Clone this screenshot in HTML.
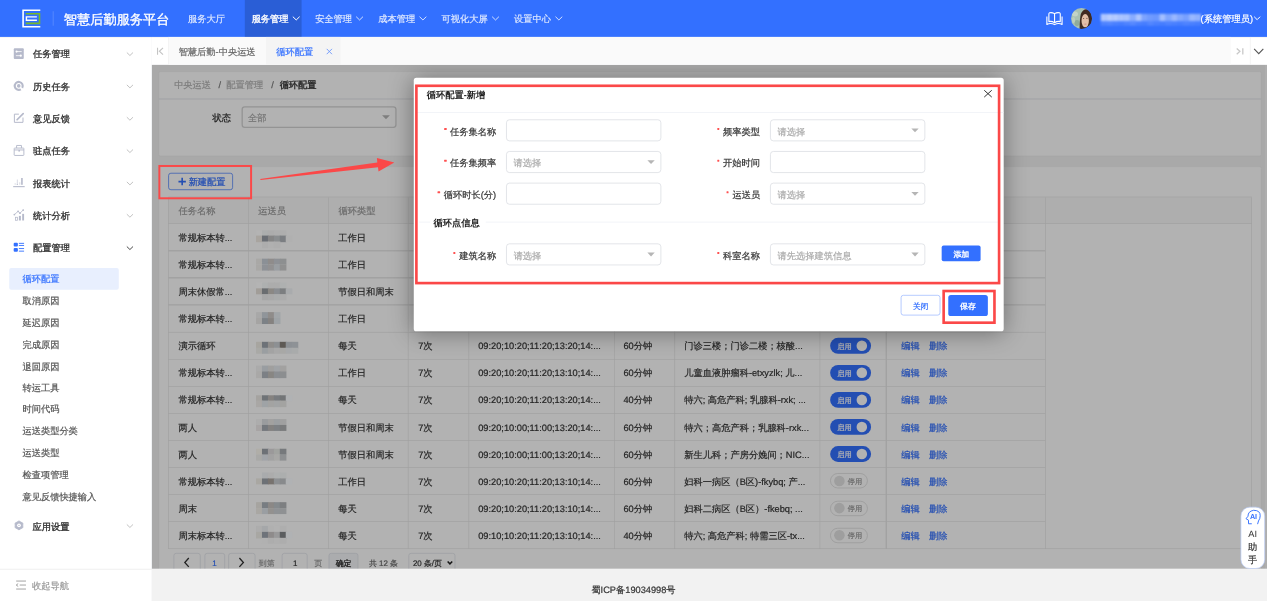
<!DOCTYPE html><html><head><meta charset="utf-8"><style>
html,body{margin:0;padding:0;width:1267px;height:601px;overflow:hidden;background:#fff}
#root{text-rendering:geometricPrecision;position:absolute;left:0;top:0;width:1920px;height:911px;transform:scale(0.6598958333333333);transform-origin:0 0;font-family:"Liberation Sans",sans-serif;overflow:hidden;background:#f0f2f5}
#root div{box-sizing:border-box}
</style></head><body><div id="root">
<div style="position:absolute;left:230.34px;top:97.74px;width:1689.66px;height:764.52px;background:#f2f2f2"></div>
<div style="position:absolute;left:1916.51px;top:97.74px;width:3.49px;height:764.52px;background:#f9f9f9"></div>
<div style="position:absolute;left:239.58px;top:107.74px;width:1672.54px;height:128.81px;background:#fff;border-radius:3px;border:1px solid #ebebeb"></div>
<div style="position:absolute;left:239.58px;top:149.42px;width:1672.54px;height:1.21px;background:#ebedf0"></div>
<div style="position:absolute;left:263.88px;top:117.76px;line-height:22.400000000000002px;font-size:14px;color:#b3b3b3;font-weight:normal;white-space:nowrap;-webkit-text-stroke:0.3px #b3b3b3;">中央运送</div>
<div style="position:absolute;left:331.31px;top:117.76px;line-height:22.400000000000002px;font-size:14px;color:#777;font-weight:normal;white-space:nowrap;-webkit-text-stroke:0.3px #777;">/</div>
<div style="position:absolute;left:342.98px;top:117.76px;line-height:22.400000000000002px;font-size:14px;color:#b3b3b3;font-weight:normal;white-space:nowrap;-webkit-text-stroke:0.3px #b3b3b3;">配置管理</div>
<div style="position:absolute;left:411.02px;top:117.76px;line-height:22.400000000000002px;font-size:14px;color:#777;font-weight:normal;white-space:nowrap;-webkit-text-stroke:0.3px #777;">/</div>
<div style="position:absolute;left:423.75px;top:117.76px;line-height:22.400000000000002px;font-size:14px;color:#333;font-weight:normal;white-space:nowrap;-webkit-text-stroke:0.5px #333;">循环配置</div>
<div style="position:absolute;left:322.07px;top:167.92px;line-height:22.400000000000002px;font-size:14px;color:#333;font-weight:normal;white-space:nowrap;-webkit-text-stroke:0.3px #333;-webkit-text-stroke:0.42px #333">状态</div>
<div style="position:absolute;left:365.51px;top:160.93px;width:235.34px;height:32.74px;border:2px solid #d4d4d4;border-radius:5px;background:#fff"></div>
<div style="position:absolute;left:375.86px;top:167.01px;line-height:22.400000000000002px;font-size:14px;color:#aaa;font-weight:normal;white-space:nowrap;-webkit-text-stroke:0.3px #aaa;">全部</div>
<svg style="position:absolute;left:578.88px;top:174.27px;width:12.12px;height:7.58px;overflow:visible;" viewBox="382 115 8 5"><path d="M382 115.5 L389.8 115.5 L385.9 119.5 Z" fill="#b5b5b5"/></svg>
<div style="position:absolute;left:239.58px;top:251.71px;width:1672.54px;height:657.52px;background:#fff;border-radius:3px;border:1px solid #ebebeb"></div>
<div style="position:absolute;left:255.04px;top:262.16px;width:97.74px;height:25.76px;border:1px solid #3370ff;border-radius:4px;background:#fff"></div>
<svg style="position:absolute;left:269.74px;top:268.22px;width:12.12px;height:13.64px;overflow:visible;" viewBox="178 177 8 9"><path d="M182 178 V185.5 M178.3 181.8 H185.7" stroke="#3370ff" stroke-width="1.6"/></svg>
<div style="position:absolute;left:285.85px;top:264.75px;line-height:22.400000000000002px;font-size:14px;color:#3370ff;font-weight:normal;white-space:nowrap;-webkit-text-stroke:0.3px #3370ff;-webkit-text-stroke:0.35px #3370ff">新建配置</div>
<div style="position:absolute;left:255.34px;top:298.68px;width:1641.32px;height:40.16px;background:#fafafa"></div>
<div style="position:absolute;left:255.34px;top:298.08px;width:1641.32px;height:1.21px;background:#e6e6e6"></div>
<div style="position:absolute;left:255.34px;top:338.24px;width:1641.32px;height:1.21px;background:#e6e6e6"></div>
<div style="position:absolute;left:255.34px;top:379.3px;width:1328.85px;height:1.21px;background:#e6e6e6"></div>
<div style="position:absolute;left:255.34px;top:420.37px;width:1328.85px;height:1.21px;background:#e6e6e6"></div>
<div style="position:absolute;left:255.34px;top:461.44px;width:1328.85px;height:1.21px;background:#e6e6e6"></div>
<div style="position:absolute;left:255.34px;top:502.5px;width:1328.85px;height:1.22px;background:#e6e6e6"></div>
<div style="position:absolute;left:255.34px;top:543.57px;width:1328.85px;height:1.21px;background:#e6e6e6"></div>
<div style="position:absolute;left:255.34px;top:584.64px;width:1328.85px;height:1.21px;background:#e6e6e6"></div>
<div style="position:absolute;left:255.34px;top:625.7px;width:1328.85px;height:1.22px;background:#e6e6e6"></div>
<div style="position:absolute;left:255.34px;top:666.77px;width:1328.85px;height:1.21px;background:#e6e6e6"></div>
<div style="position:absolute;left:255.34px;top:707.84px;width:1328.85px;height:1.21px;background:#e6e6e6"></div>
<div style="position:absolute;left:255.34px;top:748.91px;width:1328.85px;height:1.21px;background:#e6e6e6"></div>
<div style="position:absolute;left:255.34px;top:789.97px;width:1328.85px;height:1.22px;background:#e6e6e6"></div>
<div style="position:absolute;left:255.34px;top:831.04px;width:1641.32px;height:1.21px;background:#e6e6e6"></div>
<div style="position:absolute;left:254.74px;top:298.68px;width:1.21px;height:532.97px;background:#e6e6e6"></div>
<div style="position:absolute;left:375.67px;top:298.68px;width:1.21px;height:532.97px;background:#e6e6e6"></div>
<div style="position:absolute;left:497.2px;top:298.68px;width:1.21px;height:532.97px;background:#e6e6e6"></div>
<div style="position:absolute;left:618.13px;top:298.68px;width:1.21px;height:532.97px;background:#e6e6e6"></div>
<div style="position:absolute;left:709.81px;top:298.68px;width:1.21px;height:532.97px;background:#e6e6e6"></div>
<div style="position:absolute;left:930.75px;top:298.68px;width:1.22px;height:532.97px;background:#e6e6e6"></div>
<div style="position:absolute;left:1021.68px;top:298.68px;width:1.21px;height:532.97px;background:#e6e6e6"></div>
<div style="position:absolute;left:1241.71px;top:298.68px;width:1.21px;height:532.97px;background:#e6e6e6"></div>
<div style="position:absolute;left:1342.33px;top:298.68px;width:1.22px;height:532.97px;background:#e6e6e6"></div>
<div style="position:absolute;left:1583.58px;top:298.68px;width:1.22px;height:532.97px;background:#e6e6e6"></div>
<div style="position:absolute;left:1896.06px;top:298.68px;width:1.21px;height:532.97px;background:#e6e6e6"></div>
<div style="position:absolute;left:270.54px;top:308.40px;line-height:22.400000000000002px;font-size:14px;color:#999;font-weight:normal;white-space:nowrap;-webkit-text-stroke:0.3px #999;">任务名称</div>
<div style="position:absolute;left:391.47px;top:308.40px;line-height:22.400000000000002px;font-size:14px;color:#999;font-weight:normal;white-space:nowrap;-webkit-text-stroke:0.3px #999;">运送员</div>
<div style="position:absolute;left:513.01px;top:308.40px;line-height:22.400000000000002px;font-size:14px;color:#999;font-weight:normal;white-space:nowrap;-webkit-text-stroke:0.3px #999;">循环类型</div>
<div style="position:absolute;left:633.93px;top:308.40px;line-height:22.400000000000002px;font-size:14px;color:#999;font-weight:normal;white-space:nowrap;-webkit-text-stroke:0.3px #999;">循环次数</div>
<div style="position:absolute;left:725.62px;top:308.40px;line-height:22.400000000000002px;font-size:14px;color:#999;font-weight:normal;white-space:nowrap;-webkit-text-stroke:0.3px #999;">循环时间</div>
<div style="position:absolute;left:946.56px;top:308.40px;line-height:22.400000000000002px;font-size:14px;color:#999;font-weight:normal;white-space:nowrap;-webkit-text-stroke:0.3px #999;">循环时长</div>
<div style="position:absolute;left:1037.48px;top:308.40px;line-height:22.400000000000002px;font-size:14px;color:#999;font-weight:normal;white-space:nowrap;-webkit-text-stroke:0.3px #999;">循环点</div>
<div style="position:absolute;left:1257.52px;top:308.40px;line-height:22.400000000000002px;font-size:14px;color:#999;font-weight:normal;white-space:nowrap;-webkit-text-stroke:0.3px #999;">状态</div>
<div style="position:absolute;left:1358.14px;top:308.40px;line-height:22.400000000000002px;font-size:14px;color:#999;font-weight:normal;white-space:nowrap;-webkit-text-stroke:0.3px #999;">操作</div>
<div style="position:absolute;left:270.54px;top:349.08px;line-height:22.400000000000002px;font-size:14px;color:#333;font-weight:normal;white-space:nowrap;-webkit-text-stroke:0.3px #333;">常规标本转...</div>
<div style="position:absolute;left:512.70px;top:349.08px;line-height:22.400000000000002px;font-size:14px;color:#333;font-weight:normal;white-space:nowrap;-webkit-text-stroke:0.3px #333;">工作日</div>
<div style="position:absolute;left:633.63px;top:349.08px;line-height:22.400000000000002px;font-size:14px;color:#333;font-weight:normal;white-space:nowrap;-webkit-text-stroke:0.3px #333;">7次</div>
<div style="position:absolute;left:724.71px;top:349.08px;line-height:22.400000000000002px;font-size:14px;color:#333;font-weight:normal;white-space:nowrap;-webkit-text-stroke:0.3px #333;">09:20;10:20;11:20;13:20;14:...</div>
<div style="position:absolute;left:944.74px;top:349.08px;line-height:22.400000000000002px;font-size:14px;color:#333;font-weight:normal;white-space:nowrap;-webkit-text-stroke:0.3px #333;">60分钟</div>
<div style="position:absolute;left:1036.88px;top:349.08px;line-height:22.400000000000002px;font-size:14px;color:#333;font-weight:normal;white-space:nowrap;-webkit-text-stroke:0.3px #333;">门诊三楼；门诊二楼；核酸...</div>
<div style="position:absolute;left:1257.77px;top:347.25px;width:62.14px;height:24.25px;background:#3370ff;border-radius:12px"></div>
<div style="position:absolute;left:1297.93px;top:351.34px;width:16.07px;height:16.07px;background:#fff;border-radius:50%"></div>
<div style="position:absolute;left:1268.70px;top:353.61px;line-height:17.6px;font-size:11px;color:#fff;font-weight:normal;white-space:nowrap;-webkit-text-stroke:0.3px #fff;">启用</div>
<div style="position:absolute;left:1365.72px;top:349.08px;line-height:22.400000000000002px;font-size:14px;color:#3370ff;font-weight:normal;white-space:nowrap;-webkit-text-stroke:0.3px #3370ff;">编辑</div>
<div style="position:absolute;left:1407.69px;top:349.08px;line-height:22.400000000000002px;font-size:14px;color:#3370ff;font-weight:normal;white-space:nowrap;-webkit-text-stroke:0.3px #3370ff;">删除</div>
<div style="position:absolute;left:270.54px;top:390.15px;line-height:22.400000000000002px;font-size:14px;color:#333;font-weight:normal;white-space:nowrap;-webkit-text-stroke:0.3px #333;">常规标本转...</div>
<div style="position:absolute;left:512.70px;top:390.15px;line-height:22.400000000000002px;font-size:14px;color:#333;font-weight:normal;white-space:nowrap;-webkit-text-stroke:0.3px #333;">工作日</div>
<div style="position:absolute;left:633.63px;top:390.15px;line-height:22.400000000000002px;font-size:14px;color:#333;font-weight:normal;white-space:nowrap;-webkit-text-stroke:0.3px #333;">7次</div>
<div style="position:absolute;left:724.71px;top:390.15px;line-height:22.400000000000002px;font-size:14px;color:#333;font-weight:normal;white-space:nowrap;-webkit-text-stroke:0.3px #333;">09:20;10:20;11:20;13:10;14:...</div>
<div style="position:absolute;left:944.74px;top:390.15px;line-height:22.400000000000002px;font-size:14px;color:#333;font-weight:normal;white-space:nowrap;-webkit-text-stroke:0.3px #333;">60分钟</div>
<div style="position:absolute;left:1036.88px;top:390.15px;line-height:22.400000000000002px;font-size:14px;color:#333;font-weight:normal;white-space:nowrap;-webkit-text-stroke:0.3px #333;">儿童血液肿瘤科-etxyzlk; 儿...</div>
<div style="position:absolute;left:1257.77px;top:388.32px;width:62.14px;height:24.25px;background:#3370ff;border-radius:12px"></div>
<div style="position:absolute;left:1297.93px;top:392.41px;width:16.07px;height:16.06px;background:#fff;border-radius:50%"></div>
<div style="position:absolute;left:1268.70px;top:394.67px;line-height:17.6px;font-size:11px;color:#fff;font-weight:normal;white-space:nowrap;-webkit-text-stroke:0.3px #fff;">启用</div>
<div style="position:absolute;left:1365.72px;top:390.15px;line-height:22.400000000000002px;font-size:14px;color:#3370ff;font-weight:normal;white-space:nowrap;-webkit-text-stroke:0.3px #3370ff;">编辑</div>
<div style="position:absolute;left:1407.69px;top:390.15px;line-height:22.400000000000002px;font-size:14px;color:#3370ff;font-weight:normal;white-space:nowrap;-webkit-text-stroke:0.3px #3370ff;">删除</div>
<div style="position:absolute;left:270.54px;top:431.22px;line-height:22.400000000000002px;font-size:14px;color:#333;font-weight:normal;white-space:nowrap;-webkit-text-stroke:0.3px #333;">周末休假常...</div>
<div style="position:absolute;left:512.70px;top:431.22px;line-height:22.400000000000002px;font-size:14px;color:#333;font-weight:normal;white-space:nowrap;-webkit-text-stroke:0.3px #333;">节假日和周末</div>
<div style="position:absolute;left:633.63px;top:431.22px;line-height:22.400000000000002px;font-size:14px;color:#333;font-weight:normal;white-space:nowrap;-webkit-text-stroke:0.3px #333;">7次</div>
<div style="position:absolute;left:724.71px;top:431.22px;line-height:22.400000000000002px;font-size:14px;color:#333;font-weight:normal;white-space:nowrap;-webkit-text-stroke:0.3px #333;">09:20;10:20;11:20;13:20;14:...</div>
<div style="position:absolute;left:944.74px;top:431.22px;line-height:22.400000000000002px;font-size:14px;color:#333;font-weight:normal;white-space:nowrap;-webkit-text-stroke:0.3px #333;">40分钟</div>
<div style="position:absolute;left:1036.88px;top:431.22px;line-height:22.400000000000002px;font-size:14px;color:#333;font-weight:normal;white-space:nowrap;-webkit-text-stroke:0.3px #333;">特六; 高危产科; 乳腺科-rxk; ...</div>
<div style="position:absolute;left:1257.77px;top:429.39px;width:62.14px;height:24.24px;background:#3370ff;border-radius:12px"></div>
<div style="position:absolute;left:1297.93px;top:433.48px;width:16.07px;height:16.06px;background:#fff;border-radius:50%"></div>
<div style="position:absolute;left:1268.70px;top:435.74px;line-height:17.6px;font-size:11px;color:#fff;font-weight:normal;white-space:nowrap;-webkit-text-stroke:0.3px #fff;">启用</div>
<div style="position:absolute;left:1365.72px;top:431.22px;line-height:22.400000000000002px;font-size:14px;color:#3370ff;font-weight:normal;white-space:nowrap;-webkit-text-stroke:0.3px #3370ff;">编辑</div>
<div style="position:absolute;left:1407.69px;top:431.22px;line-height:22.400000000000002px;font-size:14px;color:#3370ff;font-weight:normal;white-space:nowrap;-webkit-text-stroke:0.3px #3370ff;">删除</div>
<div style="position:absolute;left:270.54px;top:472.29px;line-height:22.400000000000002px;font-size:14px;color:#333;font-weight:normal;white-space:nowrap;-webkit-text-stroke:0.3px #333;">常规标本转...</div>
<div style="position:absolute;left:512.70px;top:472.29px;line-height:22.400000000000002px;font-size:14px;color:#333;font-weight:normal;white-space:nowrap;-webkit-text-stroke:0.3px #333;">工作日</div>
<div style="position:absolute;left:633.63px;top:472.29px;line-height:22.400000000000002px;font-size:14px;color:#333;font-weight:normal;white-space:nowrap;-webkit-text-stroke:0.3px #333;">7次</div>
<div style="position:absolute;left:724.71px;top:472.29px;line-height:22.400000000000002px;font-size:14px;color:#333;font-weight:normal;white-space:nowrap;-webkit-text-stroke:0.3px #333;">09:20;10:20;11:20;13:10;14:...</div>
<div style="position:absolute;left:944.74px;top:472.29px;line-height:22.400000000000002px;font-size:14px;color:#333;font-weight:normal;white-space:nowrap;-webkit-text-stroke:0.3px #333;">60分钟</div>
<div style="position:absolute;left:1036.88px;top:472.29px;line-height:22.400000000000002px;font-size:14px;color:#333;font-weight:normal;white-space:nowrap;-webkit-text-stroke:0.3px #333;">特六；高危产科；乳腺科-rxk...</div>
<div style="position:absolute;left:1257.77px;top:470.45px;width:62.14px;height:24.25px;background:#3370ff;border-radius:12px"></div>
<div style="position:absolute;left:1297.93px;top:474.54px;width:16.07px;height:16.07px;background:#fff;border-radius:50%"></div>
<div style="position:absolute;left:1268.70px;top:476.81px;line-height:17.6px;font-size:11px;color:#fff;font-weight:normal;white-space:nowrap;-webkit-text-stroke:0.3px #fff;">启用</div>
<div style="position:absolute;left:1365.72px;top:472.29px;line-height:22.400000000000002px;font-size:14px;color:#3370ff;font-weight:normal;white-space:nowrap;-webkit-text-stroke:0.3px #3370ff;">编辑</div>
<div style="position:absolute;left:1407.69px;top:472.29px;line-height:22.400000000000002px;font-size:14px;color:#3370ff;font-weight:normal;white-space:nowrap;-webkit-text-stroke:0.3px #3370ff;">删除</div>
<div style="position:absolute;left:270.54px;top:513.35px;line-height:22.400000000000002px;font-size:14px;color:#333;font-weight:normal;white-space:nowrap;-webkit-text-stroke:0.3px #333;">演示循环</div>
<div style="position:absolute;left:512.70px;top:513.35px;line-height:22.400000000000002px;font-size:14px;color:#333;font-weight:normal;white-space:nowrap;-webkit-text-stroke:0.3px #333;">每天</div>
<div style="position:absolute;left:633.63px;top:513.35px;line-height:22.400000000000002px;font-size:14px;color:#333;font-weight:normal;white-space:nowrap;-webkit-text-stroke:0.3px #333;">7次</div>
<div style="position:absolute;left:724.71px;top:513.35px;line-height:22.400000000000002px;font-size:14px;color:#333;font-weight:normal;white-space:nowrap;-webkit-text-stroke:0.3px #333;">09:20;10:20;11:20;13:20;14:...</div>
<div style="position:absolute;left:944.74px;top:513.35px;line-height:22.400000000000002px;font-size:14px;color:#333;font-weight:normal;white-space:nowrap;-webkit-text-stroke:0.3px #333;">60分钟</div>
<div style="position:absolute;left:1036.88px;top:513.35px;line-height:22.400000000000002px;font-size:14px;color:#333;font-weight:normal;white-space:nowrap;-webkit-text-stroke:0.3px #333;">门诊三楼；门诊二楼；核酸...</div>
<div style="position:absolute;left:1257.77px;top:511.52px;width:62.14px;height:24.25px;background:#3370ff;border-radius:12px"></div>
<div style="position:absolute;left:1297.93px;top:515.61px;width:16.07px;height:16.06px;background:#fff;border-radius:50%"></div>
<div style="position:absolute;left:1268.70px;top:517.87px;line-height:17.6px;font-size:11px;color:#fff;font-weight:normal;white-space:nowrap;-webkit-text-stroke:0.3px #fff;">启用</div>
<div style="position:absolute;left:1365.72px;top:513.35px;line-height:22.400000000000002px;font-size:14px;color:#3370ff;font-weight:normal;white-space:nowrap;-webkit-text-stroke:0.3px #3370ff;">编辑</div>
<div style="position:absolute;left:1407.69px;top:513.35px;line-height:22.400000000000002px;font-size:14px;color:#3370ff;font-weight:normal;white-space:nowrap;-webkit-text-stroke:0.3px #3370ff;">删除</div>
<div style="position:absolute;left:270.54px;top:554.42px;line-height:22.400000000000002px;font-size:14px;color:#333;font-weight:normal;white-space:nowrap;-webkit-text-stroke:0.3px #333;">常规标本转...</div>
<div style="position:absolute;left:512.70px;top:554.42px;line-height:22.400000000000002px;font-size:14px;color:#333;font-weight:normal;white-space:nowrap;-webkit-text-stroke:0.3px #333;">工作日</div>
<div style="position:absolute;left:633.63px;top:554.42px;line-height:22.400000000000002px;font-size:14px;color:#333;font-weight:normal;white-space:nowrap;-webkit-text-stroke:0.3px #333;">7次</div>
<div style="position:absolute;left:724.71px;top:554.42px;line-height:22.400000000000002px;font-size:14px;color:#333;font-weight:normal;white-space:nowrap;-webkit-text-stroke:0.3px #333;">09:20;10:20;11:20;13:10;14:...</div>
<div style="position:absolute;left:944.74px;top:554.42px;line-height:22.400000000000002px;font-size:14px;color:#333;font-weight:normal;white-space:nowrap;-webkit-text-stroke:0.3px #333;">60分钟</div>
<div style="position:absolute;left:1036.88px;top:554.42px;line-height:22.400000000000002px;font-size:14px;color:#333;font-weight:normal;white-space:nowrap;-webkit-text-stroke:0.3px #333;">儿童血液肿瘤科-etxyzlk; 儿...</div>
<div style="position:absolute;left:1257.77px;top:552.59px;width:62.14px;height:24.24px;background:#3370ff;border-radius:12px"></div>
<div style="position:absolute;left:1297.93px;top:556.68px;width:16.07px;height:16.06px;background:#fff;border-radius:50%"></div>
<div style="position:absolute;left:1268.70px;top:558.94px;line-height:17.6px;font-size:11px;color:#fff;font-weight:normal;white-space:nowrap;-webkit-text-stroke:0.3px #fff;">启用</div>
<div style="position:absolute;left:1365.72px;top:554.42px;line-height:22.400000000000002px;font-size:14px;color:#3370ff;font-weight:normal;white-space:nowrap;-webkit-text-stroke:0.3px #3370ff;">编辑</div>
<div style="position:absolute;left:1407.69px;top:554.42px;line-height:22.400000000000002px;font-size:14px;color:#3370ff;font-weight:normal;white-space:nowrap;-webkit-text-stroke:0.3px #3370ff;">删除</div>
<div style="position:absolute;left:270.54px;top:595.49px;line-height:22.400000000000002px;font-size:14px;color:#333;font-weight:normal;white-space:nowrap;-webkit-text-stroke:0.3px #333;">常规标本转...</div>
<div style="position:absolute;left:512.70px;top:595.49px;line-height:22.400000000000002px;font-size:14px;color:#333;font-weight:normal;white-space:nowrap;-webkit-text-stroke:0.3px #333;">每天</div>
<div style="position:absolute;left:633.63px;top:595.49px;line-height:22.400000000000002px;font-size:14px;color:#333;font-weight:normal;white-space:nowrap;-webkit-text-stroke:0.3px #333;">7次</div>
<div style="position:absolute;left:724.71px;top:595.49px;line-height:22.400000000000002px;font-size:14px;color:#333;font-weight:normal;white-space:nowrap;-webkit-text-stroke:0.3px #333;">09:20;10:20;11:20;13:20;14:...</div>
<div style="position:absolute;left:944.74px;top:595.49px;line-height:22.400000000000002px;font-size:14px;color:#333;font-weight:normal;white-space:nowrap;-webkit-text-stroke:0.3px #333;">40分钟</div>
<div style="position:absolute;left:1036.88px;top:595.49px;line-height:22.400000000000002px;font-size:14px;color:#333;font-weight:normal;white-space:nowrap;-webkit-text-stroke:0.3px #333;">特六; 高危产科; 乳腺科-rxk; ...</div>
<div style="position:absolute;left:1257.77px;top:593.65px;width:62.14px;height:24.25px;background:#3370ff;border-radius:12px"></div>
<div style="position:absolute;left:1297.93px;top:597.75px;width:16.07px;height:16.06px;background:#fff;border-radius:50%"></div>
<div style="position:absolute;left:1268.70px;top:600.01px;line-height:17.6px;font-size:11px;color:#fff;font-weight:normal;white-space:nowrap;-webkit-text-stroke:0.3px #fff;">启用</div>
<div style="position:absolute;left:1365.72px;top:595.49px;line-height:22.400000000000002px;font-size:14px;color:#3370ff;font-weight:normal;white-space:nowrap;-webkit-text-stroke:0.3px #3370ff;">编辑</div>
<div style="position:absolute;left:1407.69px;top:595.49px;line-height:22.400000000000002px;font-size:14px;color:#3370ff;font-weight:normal;white-space:nowrap;-webkit-text-stroke:0.3px #3370ff;">删除</div>
<div style="position:absolute;left:270.54px;top:636.55px;line-height:22.400000000000002px;font-size:14px;color:#333;font-weight:normal;white-space:nowrap;-webkit-text-stroke:0.3px #333;">两人</div>
<div style="position:absolute;left:512.70px;top:636.55px;line-height:22.400000000000002px;font-size:14px;color:#333;font-weight:normal;white-space:nowrap;-webkit-text-stroke:0.3px #333;">节假日和周末</div>
<div style="position:absolute;left:633.63px;top:636.55px;line-height:22.400000000000002px;font-size:14px;color:#333;font-weight:normal;white-space:nowrap;-webkit-text-stroke:0.3px #333;">7次</div>
<div style="position:absolute;left:724.71px;top:636.55px;line-height:22.400000000000002px;font-size:14px;color:#333;font-weight:normal;white-space:nowrap;-webkit-text-stroke:0.3px #333;">09:20;10:00;11:00;13:20;14:...</div>
<div style="position:absolute;left:944.74px;top:636.55px;line-height:22.400000000000002px;font-size:14px;color:#333;font-weight:normal;white-space:nowrap;-webkit-text-stroke:0.3px #333;">60分钟</div>
<div style="position:absolute;left:1036.88px;top:636.55px;line-height:22.400000000000002px;font-size:14px;color:#333;font-weight:normal;white-space:nowrap;-webkit-text-stroke:0.3px #333;">特六；高危产科；乳腺科-rxk...</div>
<div style="position:absolute;left:1257.77px;top:634.72px;width:62.14px;height:24.25px;background:#3370ff;border-radius:12px"></div>
<div style="position:absolute;left:1297.93px;top:638.81px;width:16.07px;height:16.07px;background:#fff;border-radius:50%"></div>
<div style="position:absolute;left:1268.70px;top:641.08px;line-height:17.6px;font-size:11px;color:#fff;font-weight:normal;white-space:nowrap;-webkit-text-stroke:0.3px #fff;">启用</div>
<div style="position:absolute;left:1365.72px;top:636.55px;line-height:22.400000000000002px;font-size:14px;color:#3370ff;font-weight:normal;white-space:nowrap;-webkit-text-stroke:0.3px #3370ff;">编辑</div>
<div style="position:absolute;left:1407.69px;top:636.55px;line-height:22.400000000000002px;font-size:14px;color:#3370ff;font-weight:normal;white-space:nowrap;-webkit-text-stroke:0.3px #3370ff;">删除</div>
<div style="position:absolute;left:270.54px;top:677.62px;line-height:22.400000000000002px;font-size:14px;color:#333;font-weight:normal;white-space:nowrap;-webkit-text-stroke:0.3px #333;">两人</div>
<div style="position:absolute;left:512.70px;top:677.62px;line-height:22.400000000000002px;font-size:14px;color:#333;font-weight:normal;white-space:nowrap;-webkit-text-stroke:0.3px #333;">节假日和周末</div>
<div style="position:absolute;left:633.63px;top:677.62px;line-height:22.400000000000002px;font-size:14px;color:#333;font-weight:normal;white-space:nowrap;-webkit-text-stroke:0.3px #333;">7次</div>
<div style="position:absolute;left:724.71px;top:677.62px;line-height:22.400000000000002px;font-size:14px;color:#333;font-weight:normal;white-space:nowrap;-webkit-text-stroke:0.3px #333;">09:20;10:00;11:00;13:20;14:...</div>
<div style="position:absolute;left:944.74px;top:677.62px;line-height:22.400000000000002px;font-size:14px;color:#333;font-weight:normal;white-space:nowrap;-webkit-text-stroke:0.3px #333;">60分钟</div>
<div style="position:absolute;left:1036.88px;top:677.62px;line-height:22.400000000000002px;font-size:14px;color:#333;font-weight:normal;white-space:nowrap;-webkit-text-stroke:0.3px #333;">新生儿科；产房分娩间；NIC...</div>
<div style="position:absolute;left:1257.77px;top:675.79px;width:62.14px;height:24.24px;background:#3370ff;border-radius:12px"></div>
<div style="position:absolute;left:1297.93px;top:679.88px;width:16.07px;height:16.06px;background:#fff;border-radius:50%"></div>
<div style="position:absolute;left:1268.70px;top:682.14px;line-height:17.6px;font-size:11px;color:#fff;font-weight:normal;white-space:nowrap;-webkit-text-stroke:0.3px #fff;">启用</div>
<div style="position:absolute;left:1365.72px;top:677.62px;line-height:22.400000000000002px;font-size:14px;color:#3370ff;font-weight:normal;white-space:nowrap;-webkit-text-stroke:0.3px #3370ff;">编辑</div>
<div style="position:absolute;left:1407.69px;top:677.62px;line-height:22.400000000000002px;font-size:14px;color:#3370ff;font-weight:normal;white-space:nowrap;-webkit-text-stroke:0.3px #3370ff;">删除</div>
<div style="position:absolute;left:270.54px;top:718.69px;line-height:22.400000000000002px;font-size:14px;color:#333;font-weight:normal;white-space:nowrap;-webkit-text-stroke:0.3px #333;">常规标本转...</div>
<div style="position:absolute;left:512.70px;top:718.69px;line-height:22.400000000000002px;font-size:14px;color:#333;font-weight:normal;white-space:nowrap;-webkit-text-stroke:0.3px #333;">工作日</div>
<div style="position:absolute;left:633.63px;top:718.69px;line-height:22.400000000000002px;font-size:14px;color:#333;font-weight:normal;white-space:nowrap;-webkit-text-stroke:0.3px #333;">7次</div>
<div style="position:absolute;left:724.71px;top:718.69px;line-height:22.400000000000002px;font-size:14px;color:#333;font-weight:normal;white-space:nowrap;-webkit-text-stroke:0.3px #333;">09:20;10:20;11:20;13:10;14:...</div>
<div style="position:absolute;left:944.74px;top:718.69px;line-height:22.400000000000002px;font-size:14px;color:#333;font-weight:normal;white-space:nowrap;-webkit-text-stroke:0.3px #333;">60分钟</div>
<div style="position:absolute;left:1036.88px;top:718.69px;line-height:22.400000000000002px;font-size:14px;color:#333;font-weight:normal;white-space:nowrap;-webkit-text-stroke:0.3px #333;">妇科一病区（B区)-fkybq; 产...</div>
<div style="position:absolute;left:1257.77px;top:717.46px;width:57.29px;height:23.04px;border:1.5px solid #d6d6d6;border-radius:12px;background:#fff"></div>
<div style="position:absolute;left:1263.68px;top:720.8px;width:16.37px;height:16.36px;background:#e2e2e2;border-radius:50%"></div>
<div style="position:absolute;left:1284.76px;top:723.21px;line-height:17.6px;font-size:11px;color:#999;font-weight:normal;white-space:nowrap;-webkit-text-stroke:0.3px #999;">停用</div>
<div style="position:absolute;left:1365.72px;top:718.69px;line-height:22.400000000000002px;font-size:14px;color:#3370ff;font-weight:normal;white-space:nowrap;-webkit-text-stroke:0.3px #3370ff;">编辑</div>
<div style="position:absolute;left:1407.69px;top:718.69px;line-height:22.400000000000002px;font-size:14px;color:#3370ff;font-weight:normal;white-space:nowrap;-webkit-text-stroke:0.3px #3370ff;">删除</div>
<div style="position:absolute;left:270.54px;top:759.76px;line-height:22.400000000000002px;font-size:14px;color:#333;font-weight:normal;white-space:nowrap;-webkit-text-stroke:0.3px #333;">周末</div>
<div style="position:absolute;left:512.70px;top:759.76px;line-height:22.400000000000002px;font-size:14px;color:#333;font-weight:normal;white-space:nowrap;-webkit-text-stroke:0.3px #333;">每天</div>
<div style="position:absolute;left:633.63px;top:759.76px;line-height:22.400000000000002px;font-size:14px;color:#333;font-weight:normal;white-space:nowrap;-webkit-text-stroke:0.3px #333;">7次</div>
<div style="position:absolute;left:724.71px;top:759.76px;line-height:22.400000000000002px;font-size:14px;color:#333;font-weight:normal;white-space:nowrap;-webkit-text-stroke:0.3px #333;">09:20;10:20;11:20;13:10;14:...</div>
<div style="position:absolute;left:944.74px;top:759.76px;line-height:22.400000000000002px;font-size:14px;color:#333;font-weight:normal;white-space:nowrap;-webkit-text-stroke:0.3px #333;">60分钟</div>
<div style="position:absolute;left:1036.88px;top:759.76px;line-height:22.400000000000002px;font-size:14px;color:#333;font-weight:normal;white-space:nowrap;-webkit-text-stroke:0.3px #333;">妇科二病区（B区）-fkebq; ...</div>
<div style="position:absolute;left:1257.77px;top:758.53px;width:57.29px;height:23.03px;border:1.5px solid #d6d6d6;border-radius:12px;background:#fff"></div>
<div style="position:absolute;left:1263.68px;top:761.86px;width:16.37px;height:16.37px;background:#e2e2e2;border-radius:50%"></div>
<div style="position:absolute;left:1284.76px;top:764.28px;line-height:17.6px;font-size:11px;color:#999;font-weight:normal;white-space:nowrap;-webkit-text-stroke:0.3px #999;">停用</div>
<div style="position:absolute;left:1365.72px;top:759.76px;line-height:22.400000000000002px;font-size:14px;color:#3370ff;font-weight:normal;white-space:nowrap;-webkit-text-stroke:0.3px #3370ff;">编辑</div>
<div style="position:absolute;left:1407.69px;top:759.76px;line-height:22.400000000000002px;font-size:14px;color:#3370ff;font-weight:normal;white-space:nowrap;-webkit-text-stroke:0.3px #3370ff;">删除</div>
<div style="position:absolute;left:270.54px;top:800.82px;line-height:22.400000000000002px;font-size:14px;color:#333;font-weight:normal;white-space:nowrap;-webkit-text-stroke:0.3px #333;">周末标本转...</div>
<div style="position:absolute;left:512.70px;top:800.82px;line-height:22.400000000000002px;font-size:14px;color:#333;font-weight:normal;white-space:nowrap;-webkit-text-stroke:0.3px #333;">每天</div>
<div style="position:absolute;left:633.63px;top:800.82px;line-height:22.400000000000002px;font-size:14px;color:#333;font-weight:normal;white-space:nowrap;-webkit-text-stroke:0.3px #333;">7次</div>
<div style="position:absolute;left:724.71px;top:800.82px;line-height:22.400000000000002px;font-size:14px;color:#333;font-weight:normal;white-space:nowrap;-webkit-text-stroke:0.3px #333;">09:10;10:20;11:20;13:10;14:...</div>
<div style="position:absolute;left:944.74px;top:800.82px;line-height:22.400000000000002px;font-size:14px;color:#333;font-weight:normal;white-space:nowrap;-webkit-text-stroke:0.3px #333;">40分钟</div>
<div style="position:absolute;left:1036.88px;top:800.82px;line-height:22.400000000000002px;font-size:14px;color:#333;font-weight:normal;white-space:nowrap;-webkit-text-stroke:0.3px #333;">特六; 高危产科; 特需三区-tx...</div>
<div style="position:absolute;left:1257.77px;top:799.6px;width:57.29px;height:23.03px;border:1.5px solid #d6d6d6;border-radius:12px;background:#fff"></div>
<div style="position:absolute;left:1263.68px;top:802.93px;width:16.37px;height:16.37px;background:#e2e2e2;border-radius:50%"></div>
<div style="position:absolute;left:1284.76px;top:805.34px;line-height:17.6px;font-size:11px;color:#999;font-weight:normal;white-space:nowrap;-webkit-text-stroke:0.3px #999;">停用</div>
<div style="position:absolute;left:1365.72px;top:800.82px;line-height:22.400000000000002px;font-size:14px;color:#3370ff;font-weight:normal;white-space:nowrap;-webkit-text-stroke:0.3px #3370ff;">编辑</div>
<div style="position:absolute;left:1407.69px;top:800.82px;line-height:22.400000000000002px;font-size:14px;color:#3370ff;font-weight:normal;white-space:nowrap;-webkit-text-stroke:0.3px #3370ff;">删除</div>
<div style="position:absolute;left:262.92px;top:838.01px;width:40.76px;height:33.34px;border:1px solid #dcdfe6;border-radius:4px;background:#fff"></div>
<div style="position:absolute;left:309.9px;top:838.01px;width:31.52px;height:33.34px;border:1px solid #dcdfe6;border-radius:4px;background:#fff"></div>
<div style="position:absolute;left:346.27px;top:838.01px;width:40.76px;height:33.34px;border:1px solid #dcdfe6;border-radius:4px;background:#fff"></div>
<div style="position:absolute;left:321.54px;top:843.87px;line-height:19.200000000000003px;font-size:12px;color:#3370ff;font-weight:normal;white-space:nowrap;-webkit-text-stroke:0.3px #3370ff;">1</div>
<svg style="position:absolute;left:277.32px;top:844.07px;width:13.64px;height:16.67px;overflow:visible;" viewBox="183 557 9 11"><path d="M189 558 L185 562.5 L189 567" stroke="#333" stroke-width="1.3" fill="none"/></svg>
<svg style="position:absolute;left:359.15px;top:844.07px;width:13.64px;height:16.67px;overflow:visible;" viewBox="237 557 9 11"><path d="M239.5 558 L243.5 562.5 L239.5 567" stroke="#333" stroke-width="1.3" fill="none"/></svg>
<div style="position:absolute;left:392.16px;top:843.87px;line-height:19.200000000000003px;font-size:12px;color:#999;font-weight:normal;white-space:nowrap;-webkit-text-stroke:0.3px #999;">到第</div>
<div style="position:absolute;left:426.73px;top:838.01px;width:38.95px;height:33.34px;border:1px solid #dcdfe6;border-radius:4px;background:#fff"></div>
<div style="position:absolute;left:443.98px;top:843.87px;line-height:19.200000000000003px;font-size:12px;color:#333;font-weight:normal;white-space:nowrap;-webkit-text-stroke:0.3px #333;">1</div>
<div style="position:absolute;left:476.26px;top:843.87px;line-height:19.200000000000003px;font-size:12px;color:#999;font-weight:normal;white-space:nowrap;-webkit-text-stroke:0.3px #999;">页</div>
<div style="position:absolute;left:498.26px;top:838.01px;width:44.55px;height:33.34px;border:1px solid #dcdfe6;border-radius:4px;background:#f5f7fa"></div>
<div style="position:absolute;left:508.69px;top:843.87px;line-height:19.200000000000003px;font-size:12px;color:#333;font-weight:normal;white-space:nowrap;-webkit-text-stroke:0.5px #333;">确定</div>
<div style="position:absolute;left:559.00px;top:843.87px;line-height:19.200000000000003px;font-size:12px;color:#666;font-weight:normal;white-space:nowrap;-webkit-text-stroke:0.3px #666;">共 12 条</div>
<div style="position:absolute;left:618.89px;top:838.01px;width:71.07px;height:33.34px;border:1px solid #dcdfe6;border-radius:4px;background:#fff"></div>
<div style="position:absolute;left:625.68px;top:843.87px;line-height:19.200000000000003px;font-size:12px;color:#333;font-weight:normal;white-space:nowrap;-webkit-text-stroke:0.3px #333;">20 条/页</div>
<svg style="position:absolute;left:677.38px;top:848.62px;width:9.09px;height:7.58px;overflow:visible;" viewBox="447 560 6 5"><path d="M447.9 561.2 L450.2 563.6 L452.5 561.2" stroke="#222" stroke-width="1.5" fill="none"/></svg>
<div style="position:absolute;left:230.34px;top:97.74px;width:1689.66px;height:764.52px;background:rgba(0,0,0,.3)"></div>
<div style="position:absolute;left:388.24px;top:348.54px;width:63.65px;height:27.28px;filter:blur(0.9px)"><div style="position:absolute;left:0.00px;top:0.00px;width:9.57px;height:9.47px;background:#b4b4b4"></div><div style="position:absolute;left:8.97px;top:0.00px;width:9.57px;height:9.47px;background:#acaeae"></div><div style="position:absolute;left:17.94px;top:0.00px;width:9.57px;height:9.47px;background:#acacac"></div><div style="position:absolute;left:26.91px;top:0.00px;width:9.57px;height:9.47px;background:#aeaeae"></div><div style="position:absolute;left:35.88px;top:0.00px;width:9.57px;height:9.47px;background:#aeaeae"></div><div style="position:absolute;left:0.00px;top:8.87px;width:9.57px;height:9.47px;background:#a8a49f"></div><div style="position:absolute;left:8.97px;top:8.87px;width:9.57px;height:9.47px;background:#6a6e74"></div><div style="position:absolute;left:17.94px;top:8.87px;width:9.57px;height:9.47px;background:#858585"></div><div style="position:absolute;left:26.91px;top:8.87px;width:9.57px;height:9.47px;background:#8a8d8f"></div><div style="position:absolute;left:35.88px;top:8.87px;width:9.57px;height:9.47px;background:#7b7e82"></div><div style="position:absolute;left:44.86px;top:8.87px;width:9.57px;height:9.47px;background:#b0b0b0"></div><div style="position:absolute;left:8.97px;top:17.73px;width:9.57px;height:9.47px;background:#adadad"></div><div style="position:absolute;left:17.94px;top:17.73px;width:9.57px;height:9.47px;background:#b0b0b0"></div><div style="position:absolute;left:26.91px;top:17.73px;width:9.57px;height:9.47px;background:#aeaeae"></div></div>
<div style="position:absolute;left:388.24px;top:392.03px;width:63.65px;height:27.28px;filter:blur(0.9px)"><div style="position:absolute;left:0.00px;top:0.00px;width:9.57px;height:9.47px;background:#a9a8a6"></div><div style="position:absolute;left:8.97px;top:0.00px;width:9.57px;height:9.47px;background:#8b9096"></div><div style="position:absolute;left:17.94px;top:0.00px;width:9.57px;height:9.47px;background:#8f8c8b"></div><div style="position:absolute;left:26.91px;top:0.00px;width:9.57px;height:9.47px;background:#8e9196"></div><div style="position:absolute;left:35.88px;top:0.00px;width:9.57px;height:9.47px;background:#8d8f90"></div><div style="position:absolute;left:0.00px;top:8.87px;width:9.57px;height:9.47px;background:#a9a8a6"></div><div style="position:absolute;left:8.97px;top:8.87px;width:9.57px;height:9.47px;background:#8e9196"></div><div style="position:absolute;left:17.94px;top:8.87px;width:9.57px;height:9.47px;background:#929192"></div><div style="position:absolute;left:26.91px;top:8.87px;width:9.57px;height:9.47px;background:#9a9ea2"></div><div style="position:absolute;left:35.88px;top:8.87px;width:9.57px;height:9.47px;background:#909090"></div></div>
<div style="position:absolute;left:388.24px;top:427.79px;width:63.65px;height:27.28px;filter:blur(0.9px)"><div style="position:absolute;left:0.00px;top:0.00px;width:9.57px;height:9.47px;background:#b4b4b4"></div><div style="position:absolute;left:8.97px;top:0.00px;width:9.57px;height:9.47px;background:#aeb0b0"></div><div style="position:absolute;left:17.94px;top:0.00px;width:9.57px;height:9.47px;background:#acacac"></div><div style="position:absolute;left:26.91px;top:0.00px;width:9.57px;height:9.47px;background:#acacac"></div><div style="position:absolute;left:35.88px;top:0.00px;width:9.57px;height:9.47px;background:#aeb0b0"></div><div style="position:absolute;left:0.00px;top:8.87px;width:9.57px;height:9.47px;background:#a19d98"></div><div style="position:absolute;left:8.97px;top:8.87px;width:9.57px;height:9.47px;background:#6a6d70"></div><div style="position:absolute;left:17.94px;top:8.87px;width:9.57px;height:9.47px;background:#8b8884"></div><div style="position:absolute;left:26.91px;top:8.87px;width:9.57px;height:9.47px;background:#8a8d91"></div><div style="position:absolute;left:35.88px;top:8.87px;width:9.57px;height:9.47px;background:#7c7e80"></div><div style="position:absolute;left:44.86px;top:8.87px;width:9.57px;height:9.47px;background:#a9abad"></div><div style="position:absolute;left:8.97px;top:17.73px;width:9.57px;height:9.47px;background:#a7a7a7"></div><div style="position:absolute;left:17.94px;top:17.73px;width:9.57px;height:9.47px;background:#a9a9a9"></div><div style="position:absolute;left:26.91px;top:17.73px;width:9.57px;height:9.47px;background:#aaacac"></div><div style="position:absolute;left:35.88px;top:17.73px;width:9.57px;height:9.47px;background:#acacac"></div></div>
<div style="position:absolute;left:388.24px;top:472.8px;width:63.65px;height:27.28px;filter:blur(0.9px)"><div style="position:absolute;left:0.00px;top:0.00px;width:9.57px;height:9.47px;background:#a8a8a8"></div><div style="position:absolute;left:8.97px;top:0.00px;width:9.57px;height:9.47px;background:#90959a"></div><div style="position:absolute;left:17.94px;top:0.00px;width:9.57px;height:9.47px;background:#8f8c8a"></div><div style="position:absolute;left:26.91px;top:0.00px;width:9.57px;height:9.47px;background:#a2a6a9"></div><div style="position:absolute;left:0.00px;top:8.87px;width:9.57px;height:9.47px;background:#a5a4a3"></div><div style="position:absolute;left:8.97px;top:8.87px;width:9.57px;height:9.47px;background:#7c8186"></div><div style="position:absolute;left:17.94px;top:8.87px;width:9.57px;height:9.47px;background:#858280"></div><div style="position:absolute;left:26.91px;top:8.87px;width:9.57px;height:9.47px;background:#9ea3a7"></div></div>
<div style="position:absolute;left:388.24px;top:518.11px;width:63.65px;height:27.28px;filter:blur(0.9px)"><div style="position:absolute;left:0.00px;top:0.00px;width:9.57px;height:9.47px;background:#a7a5a0"></div><div style="position:absolute;left:8.97px;top:0.00px;width:9.57px;height:9.47px;background:#6d7278"></div><div style="position:absolute;left:17.94px;top:0.00px;width:9.57px;height:9.47px;background:#8f8d8b"></div><div style="position:absolute;left:26.91px;top:0.00px;width:9.57px;height:9.47px;background:#8d9093"></div><div style="position:absolute;left:35.88px;top:0.00px;width:9.57px;height:9.47px;background:#5e5a55"></div><div style="position:absolute;left:44.86px;top:0.00px;width:9.57px;height:9.47px;background:#8c9094"></div><div style="position:absolute;left:53.83px;top:0.00px;width:9.57px;height:9.47px;background:#8e9296"></div><div style="position:absolute;left:0.00px;top:8.87px;width:9.57px;height:9.47px;background:#a9a9a6"></div><div style="position:absolute;left:8.97px;top:8.87px;width:9.57px;height:9.47px;background:#9a9ea1"></div><div style="position:absolute;left:17.94px;top:8.87px;width:9.57px;height:9.47px;background:#a3a3a3"></div><div style="position:absolute;left:26.91px;top:8.87px;width:9.57px;height:9.47px;background:#a8a8a8"></div><div style="position:absolute;left:35.88px;top:8.87px;width:9.57px;height:9.47px;background:#a8a8a6"></div><div style="position:absolute;left:44.86px;top:8.87px;width:9.57px;height:9.47px;background:#a7a9ab"></div><div style="position:absolute;left:53.83px;top:8.87px;width:9.57px;height:9.47px;background:#a9abab"></div></div>
<div style="position:absolute;left:388.24px;top:554.18px;width:63.65px;height:27.28px;filter:blur(0.9px)"><div style="position:absolute;left:0.00px;top:0.00px;width:9.57px;height:9.47px;background:#ababab"></div><div style="position:absolute;left:8.97px;top:0.00px;width:9.57px;height:9.47px;background:#999da1"></div><div style="position:absolute;left:17.94px;top:0.00px;width:9.57px;height:9.47px;background:#a09f9e"></div><div style="position:absolute;left:26.91px;top:0.00px;width:9.57px;height:9.47px;background:#a0a3a6"></div><div style="position:absolute;left:35.88px;top:0.00px;width:9.57px;height:9.47px;background:#a2a1a0"></div><div style="position:absolute;left:0.00px;top:8.87px;width:9.57px;height:9.47px;background:#a9a8a7"></div><div style="position:absolute;left:8.97px;top:8.87px;width:9.57px;height:9.47px;background:#7c8085"></div><div style="position:absolute;left:17.94px;top:8.87px;width:9.57px;height:9.47px;background:#888683"></div><div style="position:absolute;left:26.91px;top:8.87px;width:9.57px;height:9.47px;background:#8b8e92"></div><div style="position:absolute;left:35.88px;top:8.87px;width:9.57px;height:9.47px;background:#8c8e90"></div></div>
<div style="position:absolute;left:388.24px;top:598.58px;width:63.65px;height:27.28px;filter:blur(0.9px)"><div style="position:absolute;left:0.00px;top:0.00px;width:9.57px;height:9.47px;background:#a5a3a0"></div><div style="position:absolute;left:8.97px;top:0.00px;width:9.57px;height:9.47px;background:#6f7377"></div><div style="position:absolute;left:17.94px;top:0.00px;width:9.57px;height:9.47px;background:#858280"></div><div style="position:absolute;left:26.91px;top:0.00px;width:9.57px;height:9.47px;background:#787b7f"></div><div style="position:absolute;left:35.88px;top:0.00px;width:9.57px;height:9.47px;background:#737577"></div><div style="position:absolute;left:44.86px;top:0.00px;width:9.57px;height:9.47px;background:#b0b2b4"></div><div style="position:absolute;left:0.00px;top:8.87px;width:9.57px;height:9.47px;background:#a9a7a5"></div><div style="position:absolute;left:8.97px;top:8.87px;width:9.57px;height:9.47px;background:#9fa3a6"></div><div style="position:absolute;left:17.94px;top:8.87px;width:9.57px;height:9.47px;background:#a3a3a2"></div><div style="position:absolute;left:26.91px;top:8.87px;width:9.57px;height:9.47px;background:#a2a4a5"></div><div style="position:absolute;left:35.88px;top:8.87px;width:9.57px;height:9.47px;background:#a3a3a1"></div></div>
<div style="position:absolute;left:388.24px;top:635.1px;width:63.65px;height:27.28px;filter:blur(0.9px)"><div style="position:absolute;left:0.00px;top:0.00px;width:9.57px;height:9.47px;background:#adadad"></div><div style="position:absolute;left:8.97px;top:0.00px;width:9.57px;height:9.47px;background:#9a9c9e"></div><div style="position:absolute;left:17.94px;top:0.00px;width:9.57px;height:9.47px;background:#a2a1a0"></div><div style="position:absolute;left:26.91px;top:0.00px;width:9.57px;height:9.47px;background:#9c9fa2"></div><div style="position:absolute;left:35.88px;top:0.00px;width:9.57px;height:9.47px;background:#a0a0a0"></div><div style="position:absolute;left:0.00px;top:8.87px;width:9.57px;height:9.47px;background:#a7a4a4"></div><div style="position:absolute;left:8.97px;top:8.87px;width:9.57px;height:9.47px;background:#74787d"></div><div style="position:absolute;left:17.94px;top:8.87px;width:9.57px;height:9.47px;background:#838180"></div><div style="position:absolute;left:26.91px;top:8.87px;width:9.57px;height:9.47px;background:#7d8084"></div><div style="position:absolute;left:35.88px;top:8.87px;width:9.57px;height:9.47px;background:#7a7b7c"></div></div>
<div style="position:absolute;left:388.24px;top:679.96px;width:63.65px;height:27.28px;filter:blur(0.9px)"><div style="position:absolute;left:0.00px;top:0.00px;width:9.57px;height:9.47px;background:#b0aea8"></div><div style="position:absolute;left:8.97px;top:0.00px;width:9.57px;height:9.47px;background:#6d7176"></div><div style="position:absolute;left:17.94px;top:0.00px;width:9.57px;height:9.47px;background:#9b999a"></div><div style="position:absolute;left:26.91px;top:0.00px;width:9.57px;height:9.47px;background:#a1a3a0"></div><div style="position:absolute;left:35.88px;top:0.00px;width:9.57px;height:9.47px;background:#76797c"></div><div style="position:absolute;left:0.00px;top:8.87px;width:9.57px;height:9.47px;background:#a9a9a7"></div><div style="position:absolute;left:8.97px;top:8.87px;width:9.57px;height:9.47px;background:#a1a4a8"></div><div style="position:absolute;left:17.94px;top:8.87px;width:9.57px;height:9.47px;background:#a2a2a2"></div><div style="position:absolute;left:26.91px;top:8.87px;width:9.57px;height:9.47px;background:#a8a8a6"></div><div style="position:absolute;left:35.88px;top:8.87px;width:9.57px;height:9.47px;background:#8e9092"></div></div>
<div style="position:absolute;left:388.24px;top:715.72px;width:63.65px;height:27.28px;filter:blur(0.9px)"><div style="position:absolute;left:8.97px;top:0.00px;width:9.57px;height:9.47px;background:#a9abad"></div><div style="position:absolute;left:17.94px;top:0.00px;width:9.57px;height:9.47px;background:#acacac"></div><div style="position:absolute;left:26.91px;top:0.00px;width:9.57px;height:9.47px;background:#aeb0b0"></div><div style="position:absolute;left:35.88px;top:0.00px;width:9.57px;height:9.47px;background:#acaeae"></div><div style="position:absolute;left:0.00px;top:8.87px;width:9.57px;height:9.47px;background:#a9a7a2"></div><div style="position:absolute;left:8.97px;top:8.87px;width:9.57px;height:9.47px;background:#6d7176"></div><div style="position:absolute;left:17.94px;top:8.87px;width:9.57px;height:9.47px;background:#78736f"></div><div style="position:absolute;left:26.91px;top:8.87px;width:9.57px;height:9.47px;background:#8d9093"></div><div style="position:absolute;left:35.88px;top:8.87px;width:9.57px;height:9.47px;background:#888a8c"></div><div style="position:absolute;left:44.86px;top:8.87px;width:9.57px;height:9.47px;background:#b0b2b4"></div></div>
<div style="position:absolute;left:388.24px;top:760.73px;width:63.65px;height:27.28px;filter:blur(0.9px)"><div style="position:absolute;left:0.00px;top:0.00px;width:9.57px;height:9.47px;background:#a6a4a0"></div><div style="position:absolute;left:8.97px;top:0.00px;width:9.57px;height:9.47px;background:#787d82"></div><div style="position:absolute;left:17.94px;top:0.00px;width:9.57px;height:9.47px;background:#8b8886"></div><div style="position:absolute;left:26.91px;top:0.00px;width:9.57px;height:9.47px;background:#858a8d"></div><div style="position:absolute;left:35.88px;top:0.00px;width:9.57px;height:9.47px;background:#7d7f81"></div><div style="position:absolute;left:0.00px;top:8.87px;width:9.57px;height:9.47px;background:#a9a7a3"></div><div style="position:absolute;left:8.97px;top:8.87px;width:9.57px;height:9.47px;background:#9a9ea2"></div><div style="position:absolute;left:17.94px;top:8.87px;width:9.57px;height:9.47px;background:#93918f"></div><div style="position:absolute;left:26.91px;top:8.87px;width:9.57px;height:9.47px;background:#8f9295"></div><div style="position:absolute;left:35.88px;top:8.87px;width:9.57px;height:9.47px;background:#8f9193"></div></div>
<div style="position:absolute;left:388.24px;top:797.25px;width:63.65px;height:27.28px;filter:blur(0.9px)"><div style="position:absolute;left:0.00px;top:0.00px;width:9.57px;height:9.47px;background:#adadad"></div><div style="position:absolute;left:8.97px;top:0.00px;width:9.57px;height:9.47px;background:#a5a7a9"></div><div style="position:absolute;left:17.94px;top:0.00px;width:9.57px;height:9.47px;background:#b0b0b0"></div><div style="position:absolute;left:26.91px;top:0.00px;width:9.57px;height:9.47px;background:#b2b2b2"></div><div style="position:absolute;left:35.88px;top:0.00px;width:9.57px;height:9.47px;background:#aeaeae"></div><div style="position:absolute;left:0.00px;top:8.87px;width:9.57px;height:9.47px;background:#a8a7a3"></div><div style="position:absolute;left:8.97px;top:8.87px;width:9.57px;height:9.47px;background:#6e737a"></div><div style="position:absolute;left:17.94px;top:8.87px;width:9.57px;height:9.47px;background:#8e8b8b"></div><div style="position:absolute;left:26.91px;top:8.87px;width:9.57px;height:9.47px;background:#99999a"></div><div style="position:absolute;left:35.88px;top:8.87px;width:9.57px;height:9.47px;background:#5b5d5f"></div><div style="position:absolute;left:44.86px;top:8.87px;width:9.57px;height:9.47px;background:#b0b2b4"></div><div style="position:absolute;left:8.97px;top:17.73px;width:9.57px;height:9.47px;background:#b1b1b1"></div><div style="position:absolute;left:17.94px;top:17.73px;width:9.57px;height:9.47px;background:#adadad"></div><div style="position:absolute;left:26.91px;top:17.73px;width:9.57px;height:9.47px;background:#afafaf"></div><div style="position:absolute;left:35.88px;top:17.73px;width:9.57px;height:9.47px;background:#adadad"></div></div>
<div style="position:absolute;left:0.0px;top:0.0px;width:1920.00px;height:56.07px;background:#3370ff"></div>
<div style="position:absolute;left:370.82px;top:0.0px;width:86.22px;height:56.07px;background:#2a5ed6"></div>
<svg style="position:absolute;left:30.31px;top:12.12px;width:36.37px;height:33.34px;overflow:visible;" viewBox="20 8 24 22"><path d="M40.5 10.4 H23.3 V26.8 H40.5" stroke="#fff" stroke-width="1.6" fill="none"/>
<path d="M25.9 13.9 H39.7 V23.5 H25.9" stroke="#78b82a" stroke-width="1.6" fill="none"/>
<path d="M37.1 17 H26.6 V20.3 H37.1" stroke="#fff" stroke-width="1.4" fill="none"/></svg>
<div style="position:absolute;left:79.86px;top:16.67px;width:0.91px;height:22.73px;background:rgba(255,255,255,.25)"></div>
<div style="position:absolute;left:96.79px;top:14.72px;line-height:32.0px;font-size:20px;color:#fff;font-weight:normal;white-space:nowrap;-webkit-text-stroke:0.5px #fff;">智慧后勤服务平台</div>
<div style="position:absolute;left:285.09px;top:17.59px;line-height:22.400000000000002px;font-size:14px;color:rgba(255,255,255,.78);font-weight:normal;white-space:nowrap;-webkit-text-stroke:0.3px rgba(255,255,255,.78);">服务大厅</div>
<div style="position:absolute;left:381.32px;top:17.59px;line-height:22.400000000000002px;font-size:14px;color:#fff;font-weight:normal;white-space:nowrap;-webkit-text-stroke:0.5px #fff;">服务管理</div>
<svg style="position:absolute;left:443.19px;top:22.73px;width:12.12px;height:9.09px;overflow:visible;" viewBox="292.46 15 8.0 6"><path d="M292.96 16.5 L296.35999999999996 19.8 L299.76 16.5" stroke="#fff" stroke-width="1" fill="none"/></svg>
<div style="position:absolute;left:477.55px;top:17.59px;line-height:22.400000000000002px;font-size:14px;color:rgba(255,255,255,.78);font-weight:normal;white-space:nowrap;-webkit-text-stroke:0.3px rgba(255,255,255,.78);">安全管理</div>
<svg style="position:absolute;left:539.42px;top:22.73px;width:12.12px;height:9.09px;overflow:visible;" viewBox="355.96 15 8.0 6"><path d="M356.46 16.5 L359.85999999999996 19.8 L363.26 16.5" stroke="rgba(255,255,255,.78)" stroke-width="1" fill="none"/></svg>
<div style="position:absolute;left:573.17px;top:17.59px;line-height:22.400000000000002px;font-size:14px;color:rgba(255,255,255,.78);font-weight:normal;white-space:nowrap;-webkit-text-stroke:0.3px rgba(255,255,255,.78);">成本管理</div>
<svg style="position:absolute;left:635.04px;top:22.73px;width:12.12px;height:9.09px;overflow:visible;" viewBox="419.06 15 8.0 6"><path d="M419.56 16.5 L422.96 19.8 L426.36 16.5" stroke="rgba(255,255,255,.78)" stroke-width="1" fill="none"/></svg>
<div style="position:absolute;left:668.94px;top:17.59px;line-height:22.400000000000002px;font-size:14px;color:rgba(255,255,255,.78);font-weight:normal;white-space:nowrap;-webkit-text-stroke:0.3px rgba(255,255,255,.78);">可视化大屏</div>
<svg style="position:absolute;left:744.81px;top:22.73px;width:12.13px;height:9.09px;overflow:visible;" viewBox="491.5 15 8.0 6"><path d="M492.0 16.5 L495.4 19.8 L498.8 16.5" stroke="rgba(255,255,255,.78)" stroke-width="1" fill="none"/></svg>
<div style="position:absolute;left:778.81px;top:17.59px;line-height:22.400000000000002px;font-size:14px;color:rgba(255,255,255,.78);font-weight:normal;white-space:nowrap;-webkit-text-stroke:0.3px rgba(255,255,255,.78);">设置中心</div>
<svg style="position:absolute;left:840.68px;top:22.73px;width:12.12px;height:9.09px;overflow:visible;" viewBox="554.76 15 8.0 6"><path d="M555.26 16.5 L558.66 19.8 L562.06 16.5" stroke="rgba(255,255,255,.78)" stroke-width="1" fill="none"/></svg>
<svg style="position:absolute;left:1583.58px;top:16.67px;width:27.28px;height:22.73px;overflow:visible;" viewBox="1045 11 18 15"><path d="M1046.6 16.2 V24.2 Q1050.5 22.4 1054.3 24.4 Q1058 22.4 1061.8 24.2 V16.2" stroke="#fff" stroke-width="1.1" fill="none" stroke-linejoin="round"/>
<path d="M1054.3 13.4 Q1051.5 11.9 1049.3 12.6 Q1048.6 12.9 1048.6 13.8 V21.4 Q1051.5 20.7 1054.3 22.5 Q1057 20.7 1060 21.4 V13.8 Q1060 12.9 1059.3 12.6 Q1057 11.9 1054.3 13.4 Z M1054.3 13.4 V22.5" stroke="#fff" stroke-width="1.1" fill="none" stroke-linejoin="round"/></svg>
<svg style="position:absolute;left:1622.98px;top:12.12px;width:31.83px;height:31.83px;overflow:visible;" viewBox="1071 8 21 21"><defs><clipPath id="av"><circle cx="1081.5" cy="18.5" r="10.5"/></clipPath><filter id="avb"><feGaussianBlur stdDeviation="0.5"/></filter></defs>
<g clip-path="url(#av)"><g filter="url(#avb)"><rect x="1070" y="7" width="23" height="23" fill="#a9c1b3"/>
<ellipse cx="1075" cy="14" rx="3" ry="2.5" fill="#c3d3c6"/><ellipse cx="1077" cy="23" rx="2.5" ry="3" fill="#8fab9c"/><ellipse cx="1073.5" cy="20" rx="1.5" ry="3" fill="#bccdbf"/>
<path d="M1079.6 30 Q1079.5 20 1080.8 14 Q1082.8 9 1087 9.3 Q1091.5 11 1092.3 18 Q1092 25 1089.5 30 Z" fill="#3f2c22"/>
<ellipse cx="1085.2" cy="20.8" rx="3.7" ry="6.6" fill="#e2bfa9"/>
<circle cx="1083.6" cy="18.6" r="0.6" fill="#6a4a3a"/><circle cx="1086.9" cy="18.4" r="0.6" fill="#6a4a3a"/>
<ellipse cx="1085.4" cy="24.2" rx="1.3" ry="0.6" fill="#d0908a"/></g></g></svg>
<div style="position:absolute;left:1667.69px;top:21.22px;width:153.05px;height:18.18px;filter:blur(1.4px)"><div style="position:absolute;left:0.00px;top:0;width:8.94px;height:10.61px;background:rgba(255,255,255,0.62)"></div><div style="position:absolute;left:0.00px;top:10.61px;width:8.94px;height:6.82px;background:rgba(255,255,255,0.14)"></div><div style="position:absolute;left:8.94px;top:0;width:8.94px;height:10.61px;background:rgba(255,255,255,0.66)"></div><div style="position:absolute;left:8.94px;top:10.61px;width:8.94px;height:6.82px;background:rgba(255,255,255,0.16)"></div><div style="position:absolute;left:17.88px;top:0;width:8.94px;height:10.61px;background:rgba(255,255,255,0.64)"></div><div style="position:absolute;left:17.88px;top:10.61px;width:8.94px;height:6.82px;background:rgba(255,255,255,0.12)"></div><div style="position:absolute;left:26.82px;top:0;width:8.94px;height:10.61px;background:rgba(255,255,255,0.6)"></div><div style="position:absolute;left:26.82px;top:10.61px;width:8.94px;height:6.82px;background:rgba(255,255,255,0.1)"></div><div style="position:absolute;left:35.76px;top:0;width:8.94px;height:10.61px;background:rgba(255,255,255,0.58)"></div><div style="position:absolute;left:35.76px;top:10.61px;width:8.94px;height:6.82px;background:rgba(255,255,255,0.14)"></div><div style="position:absolute;left:44.70px;top:0;width:8.94px;height:10.61px;background:rgba(255,255,255,0.42)"></div><div style="position:absolute;left:44.70px;top:10.61px;width:8.94px;height:6.82px;background:rgba(255,255,255,0.18)"></div><div style="position:absolute;left:53.64px;top:0;width:8.94px;height:10.61px;background:rgba(255,255,255,0.6)"></div><div style="position:absolute;left:53.64px;top:10.61px;width:8.94px;height:6.82px;background:rgba(255,255,255,0.12)"></div><div style="position:absolute;left:62.59px;top:0;width:8.94px;height:10.61px;background:rgba(255,255,255,0.36)"></div><div style="position:absolute;left:62.59px;top:10.61px;width:8.94px;height:6.82px;background:rgba(255,255,255,0.1)"></div><div style="position:absolute;left:71.53px;top:0;width:8.94px;height:10.61px;background:rgba(255,255,255,0.3)"></div><div style="position:absolute;left:71.53px;top:10.61px;width:8.94px;height:6.82px;background:rgba(255,255,255,0.16)"></div><div style="position:absolute;left:80.47px;top:0;width:8.94px;height:10.61px;background:rgba(255,255,255,0.28)"></div><div style="position:absolute;left:80.47px;top:10.61px;width:8.94px;height:6.82px;background:rgba(255,255,255,0.12)"></div><div style="position:absolute;left:89.41px;top:0;width:8.94px;height:10.61px;background:rgba(255,255,255,0.55)"></div><div style="position:absolute;left:89.41px;top:10.61px;width:8.94px;height:6.82px;background:rgba(255,255,255,0.1)"></div><div style="position:absolute;left:98.35px;top:0;width:8.94px;height:10.61px;background:rgba(255,255,255,0.38)"></div><div style="position:absolute;left:98.35px;top:10.61px;width:8.94px;height:6.82px;background:rgba(255,255,255,0.14)"></div><div style="position:absolute;left:107.29px;top:0;width:8.94px;height:10.61px;background:rgba(255,255,255,0.5)"></div><div style="position:absolute;left:107.29px;top:10.61px;width:8.94px;height:6.82px;background:rgba(255,255,255,0.12)"></div><div style="position:absolute;left:116.23px;top:0;width:8.94px;height:10.61px;background:rgba(255,255,255,0.4)"></div><div style="position:absolute;left:116.23px;top:10.61px;width:8.94px;height:6.82px;background:rgba(255,255,255,0.1)"></div><div style="position:absolute;left:125.17px;top:0;width:8.94px;height:10.61px;background:rgba(255,255,255,0.34)"></div><div style="position:absolute;left:125.17px;top:10.61px;width:8.94px;height:6.82px;background:rgba(255,255,255,0.14)"></div><div style="position:absolute;left:134.11px;top:0;width:8.94px;height:10.61px;background:rgba(255,255,255,0.5)"></div><div style="position:absolute;left:134.11px;top:10.61px;width:8.94px;height:6.82px;background:rgba(255,255,255,0.12)"></div><div style="position:absolute;left:143.05px;top:0;width:8.94px;height:10.61px;background:rgba(255,255,255,0.46)"></div><div style="position:absolute;left:143.05px;top:10.61px;width:8.94px;height:6.82px;background:rgba(255,255,255,0.1)"></div></div>
<div style="position:absolute;left:1819.42px;top:17.74px;line-height:22.400000000000002px;font-size:14px;color:#fff;font-weight:normal;white-space:nowrap;-webkit-text-stroke:0.3px #fff;">(系统管理员)</div>
<svg style="position:absolute;left:1898.78px;top:22.73px;width:12.13px;height:9.09px;overflow:visible;" viewBox="1253 15 8 6"><path d="M1254 16.5 L1257 19.5 L1260 16.5" stroke="#fff" stroke-width="1" fill="none"/></svg>
<div style="position:absolute;left:0.0px;top:56.07px;width:230.34px;height:854.68px;background:#fff"></div>
<div style="position:absolute;left:229.43px;top:97.74px;width:0.91px;height:764.52px;background:#eceef2"></div>
<div style="position:absolute;left:229.73px;top:56.07px;width:0.61px;height:41.67px;background:#f3f3f3"></div>
<div style="position:absolute;left:49.90px;top:70.63px;line-height:22.400000000000002px;font-size:14px;color:#333;font-weight:normal;white-space:nowrap;-webkit-text-stroke:0.5px #333;">任务管理</div>
<svg style="position:absolute;left:190.94px;top:78.95px;width:12.12px;height:6.06px;overflow:visible;" viewBox="126 52.1 8 4.0"><path d="M126.8 52.5 L129.9 55.5 L133 52.5" stroke="#bbb" stroke-width="0.9" fill="none"/></svg>
<div style="position:absolute;left:49.90px;top:119.68px;line-height:22.400000000000002px;font-size:14px;color:#333;font-weight:normal;white-space:nowrap;-webkit-text-stroke:0.5px #333;">历史任务</div>
<svg style="position:absolute;left:190.94px;top:128.01px;width:12.12px;height:6.06px;overflow:visible;" viewBox="126 84.47 8 4.0"><path d="M126.8 84.87 L129.9 87.87 L133 84.87" stroke="#bbb" stroke-width="0.9" fill="none"/></svg>
<div style="position:absolute;left:49.90px;top:168.74px;line-height:22.400000000000002px;font-size:14px;color:#333;font-weight:normal;white-space:nowrap;-webkit-text-stroke:0.5px #333;">意见反馈</div>
<svg style="position:absolute;left:190.94px;top:177.06px;width:12.12px;height:6.06px;overflow:visible;" viewBox="126 116.84 8 4.0"><path d="M126.8 117.24000000000001 L129.9 120.24000000000001 L133 117.24000000000001" stroke="#bbb" stroke-width="0.9" fill="none"/></svg>
<div style="position:absolute;left:49.90px;top:217.79px;line-height:22.400000000000002px;font-size:14px;color:#333;font-weight:normal;white-space:nowrap;-webkit-text-stroke:0.5px #333;">驻点任务</div>
<svg style="position:absolute;left:190.94px;top:226.11px;width:12.12px;height:6.06px;overflow:visible;" viewBox="126 149.20999999999998 8 4.0"><path d="M126.8 149.60999999999999 L129.9 152.60999999999999 L133 149.60999999999999" stroke="#bbb" stroke-width="0.9" fill="none"/></svg>
<div style="position:absolute;left:49.90px;top:266.84px;line-height:22.400000000000002px;font-size:14px;color:#333;font-weight:normal;white-space:nowrap;-webkit-text-stroke:0.5px #333;">报表统计</div>
<svg style="position:absolute;left:190.94px;top:275.16px;width:12.12px;height:6.07px;overflow:visible;" viewBox="126 181.57999999999998 8 4.0"><path d="M126.8 181.98 L129.9 184.98 L133 181.98" stroke="#bbb" stroke-width="0.9" fill="none"/></svg>
<div style="position:absolute;left:49.90px;top:315.90px;line-height:22.400000000000002px;font-size:14px;color:#333;font-weight:normal;white-space:nowrap;-webkit-text-stroke:0.5px #333;">统计分析</div>
<svg style="position:absolute;left:190.94px;top:324.22px;width:12.12px;height:6.06px;overflow:visible;" viewBox="126 213.95 8 4.0"><path d="M126.8 214.35 L129.9 217.35 L133 214.35" stroke="#bbb" stroke-width="0.9" fill="none"/></svg>
<div style="position:absolute;left:49.90px;top:364.95px;line-height:22.400000000000002px;font-size:14px;color:#333;font-weight:normal;white-space:nowrap;-webkit-text-stroke:0.5px #333;">配置管理</div>
<svg style="position:absolute;left:190.94px;top:373.27px;width:12.12px;height:6.06px;overflow:visible;" viewBox="126 246.31999999999996 8 4.0"><path d="M126.8 246.71999999999997 L129.9 249.71999999999997 L133 246.71999999999997" stroke="#333" stroke-width="0.9" fill="none"/></svg>
<svg style="position:absolute;left:18.18px;top:69.71px;width:21.22px;height:21.21px;overflow:visible;" viewBox="12 46 14 14"><rect x="13.9" y="48.1" width="10" height="10.6" rx="0.9" fill="#b6bacb"/><path d="M16.7 51.4 H21.8 M16 55.5 H20.9" stroke="#fff" stroke-width="0.8"/><circle cx="16.7" cy="51.4" r="1.1" fill="#fff"/><circle cx="20.9" cy="55.5" r="1.1" fill="#fff"/></svg>
<svg style="position:absolute;left:18.18px;top:119.72px;width:21.22px;height:21.21px;overflow:visible;" viewBox="12 79 14 14"><path d="M20.97 89.09 A4 4 0 1 1 22.31 87.7" stroke="#b6bacb" stroke-width="2.1" fill="none"/><circle cx="18.85" cy="85.7" r="1.8" fill="#b6bacb"/></svg>
<svg style="position:absolute;left:18.18px;top:168.21px;width:21.22px;height:21.21px;overflow:visible;" viewBox="12 111 14 14"><path d="M19 114.3 H14.5 V122.5 H23.1 V117.7" stroke="#b6bacb" stroke-width="1" fill="none"/><path d="M17.2 119.9 L23.3 113.8" stroke="#b6bacb" stroke-width="1.7" stroke-linecap="round"/></svg>
<svg style="position:absolute;left:18.18px;top:218.22px;width:21.22px;height:21.21px;overflow:visible;" viewBox="12 144 14 14"><rect x="14.3" y="148.2" width="9.7" height="7.4" rx="0.6" stroke="#b6bacb" stroke-width="0.95" fill="none"/><path d="M16.7 148.2 V145.6 H21.6 V148.2 M14.3 150.1 H24" stroke="#b6bacb" stroke-width="0.95" fill="none"/><rect x="18.5" y="150.2" width="1.6" height="1.5" fill="#b6bacb"/></svg>
<svg style="position:absolute;left:18.18px;top:266.71px;width:21.22px;height:21.21px;overflow:visible;" viewBox="12 176 14 14"><path d="M13.3 186.45 H24.8" stroke="#b6bacb" stroke-width="1.1"/><rect x="21.25" y="177.8" width="1.6" height="6.8" fill="#b6bacb"/><path d="M17.5 184.5 V179.3 M19.9 184.5 V182 M15.3 184.5 V183" stroke="#b6bacb" stroke-width="1.2" opacity=".45"/><circle cx="17.4" cy="184.3" r="0.6" fill="#b6bacb"/></svg>
<svg style="position:absolute;left:18.18px;top:315.2px;width:21.22px;height:21.22px;overflow:visible;" viewBox="12 208 14 14"><path d="M14.5 214.7 L18.2 211.5 L20.1 213.3 L23.3 210.2" stroke="#b6bacb" stroke-width="0.8" fill="none"/><circle cx="14.5" cy="214.7" r="0.9" fill="#b6bacb"/><circle cx="18.2" cy="211.5" r="0.9" fill="#b6bacb"/><circle cx="20.1" cy="213.3" r="0.9" fill="#b6bacb"/><circle cx="23.3" cy="210.2" r="0.9" fill="#b6bacb"/><rect x="15.6" y="217.4" width="1.9" height="3" stroke="#b6bacb" stroke-width="0.8" fill="none"/><rect x="19" y="216" width="2" height="4.6" fill="#b6bacb"/><rect x="22.3" y="214" width="1.9" height="6.6" fill="#b6bacb"/></svg>
<svg style="position:absolute;left:18.18px;top:365.21px;width:21.22px;height:19.70px;overflow:visible;" viewBox="12 241 14 13"><rect x="13.8" y="242.9" width="4.2" height="3.8" rx="1" fill="#3370ff"/><rect x="13.8" y="248.1" width="4.2" height="3.9" rx="1" fill="#3370ff"/><path d="M19 243.5 H24.2 M19 245.6 H24.2 M19 248.7 H24.2 M19 251.3 H24.2" stroke="#3370ff" stroke-width="0.9"/></svg>
<div style="position:absolute;left:13.94px;top:406.12px;width:166.39px;height:32.43px;background:#e8effe;border-radius:3px"></div>
<div style="position:absolute;left:33.99px;top:411.90px;line-height:22.400000000000002px;font-size:14px;color:#3370ff;font-weight:normal;white-space:nowrap;-webkit-text-stroke:0.3px #3370ff;">循环配置</div>
<div style="position:absolute;left:33.99px;top:444.83px;line-height:22.400000000000002px;font-size:14px;color:#555;font-weight:normal;white-space:nowrap;-webkit-text-stroke:0.3px #555;">取消原因</div>
<div style="position:absolute;left:33.99px;top:477.76px;line-height:22.400000000000002px;font-size:14px;color:#555;font-weight:normal;white-space:nowrap;-webkit-text-stroke:0.3px #555;">延迟原因</div>
<div style="position:absolute;left:33.99px;top:510.69px;line-height:22.400000000000002px;font-size:14px;color:#555;font-weight:normal;white-space:nowrap;-webkit-text-stroke:0.3px #555;">完成原因</div>
<div style="position:absolute;left:33.99px;top:543.61px;line-height:22.400000000000002px;font-size:14px;color:#555;font-weight:normal;white-space:nowrap;-webkit-text-stroke:0.3px #555;">退回原因</div>
<div style="position:absolute;left:33.99px;top:576.54px;line-height:22.400000000000002px;font-size:14px;color:#555;font-weight:normal;white-space:nowrap;-webkit-text-stroke:0.3px #555;">转运工具</div>
<div style="position:absolute;left:33.99px;top:609.47px;line-height:22.400000000000002px;font-size:14px;color:#555;font-weight:normal;white-space:nowrap;-webkit-text-stroke:0.3px #555;">时间代码</div>
<div style="position:absolute;left:33.99px;top:642.40px;line-height:22.400000000000002px;font-size:14px;color:#555;font-weight:normal;white-space:nowrap;-webkit-text-stroke:0.3px #555;">运送类型分类</div>
<div style="position:absolute;left:33.99px;top:675.33px;line-height:22.400000000000002px;font-size:14px;color:#555;font-weight:normal;white-space:nowrap;-webkit-text-stroke:0.3px #555;">运送类型</div>
<div style="position:absolute;left:33.99px;top:708.26px;line-height:22.400000000000002px;font-size:14px;color:#555;font-weight:normal;white-space:nowrap;-webkit-text-stroke:0.3px #555;">检查项管理</div>
<div style="position:absolute;left:33.99px;top:741.19px;line-height:22.400000000000002px;font-size:14px;color:#555;font-weight:normal;white-space:nowrap;-webkit-text-stroke:0.3px #555;">意见反馈快捷输入</div>
<div style="position:absolute;left:49.45px;top:787.11px;line-height:22.400000000000002px;font-size:14px;color:#333;font-weight:normal;white-space:nowrap;-webkit-text-stroke:0.5px #333;">应用设置</div>
<svg style="position:absolute;left:190.94px;top:794.06px;width:12.12px;height:6.07px;overflow:visible;" viewBox="126 524 8 4"><path d="M126.8 524.5 L129.9 527.5 L133 524.5" stroke="#bbb" stroke-width="0.9" fill="none"/></svg>
<svg style="position:absolute;left:18.18px;top:786.49px;width:21.22px;height:19.70px;overflow:visible;" viewBox="12 519 14 13"><path d="M19.10 521.20 L21.00 522.41 L23.00 523.45 L22.90 525.70 L23.00 527.95 L21.00 528.99 L19.10 530.20 L17.20 528.99 L15.20 527.95 L15.30 525.70 L15.20 523.45 L17.20 522.41 Z" fill="#b6bacb" stroke="#b6bacb" stroke-width="0.9" stroke-linejoin="round"/><circle cx="19.1" cy="525.7" r="1.9" fill="#fff"/><circle cx="19.1" cy="525.7" r="0.7" fill="#b6bacb"/></svg>
<div style="position:absolute;left:230.34px;top:862.26px;width:1689.66px;height:48.49px;background:#f2f2f2"></div>
<div style="position:absolute;left:460.00px;width:1000px;text-align:center;top:883.49px;line-height:22.400000000000002px;font-size:14px;color:#333;font-weight:normal;white-space:nowrap;-webkit-text-stroke:0.3px #333;">蜀ICP备19034998号</div>
<div style="position:absolute;left:0.0px;top:862.26px;width:230.34px;height:1.06px;background:#e6e6e6"></div>
<svg style="position:absolute;left:22.73px;top:878.93px;width:18.19px;height:15.15px;overflow:visible;" viewBox="15 580 12 10"><path d="M16 581 H25.8 M19.5 585 H25.8 M16 589 H25.8 M18 583.6 L16 585 L18 586.4" stroke="#999" stroke-width="0.9" fill="none"/></svg>
<div style="position:absolute;left:48.39px;top:877.43px;line-height:22.400000000000002px;font-size:14px;color:#999;font-weight:normal;white-space:nowrap;-webkit-text-stroke:0.3px #999;">收起导航</div>
<div style="position:absolute;left:627.07px;top:118.2px;width:893.78px;height:383.85px;background:#fff;border-radius:4px;box-shadow:0 2px 36px rgba(0,0,0,.38)"></div>
<div style="position:absolute;left:646.81px;top:133.37px;line-height:22.400000000000002px;font-size:14px;color:#222;font-weight:bold;white-space:nowrap;">循环配置-新增</div>
<svg style="position:absolute;left:1489.63px;top:134.87px;width:15.15px;height:13.64px;overflow:visible;" viewBox="983 89 10 9"><path d="M984 90.2 L991.5 97 M991.5 90.2 L984 97" stroke="#333" stroke-width="1" fill="none"/></svg>
<div style="position:absolute;left:628.89px;top:169.72px;width:891.96px;height:1.22px;background:#ebeef5"></div>
<div style="position:absolute;left:673.29px;top:193.67px;width:3.33px;height:3.33px;background:#ff5050;border-radius:0.6px"></div>
<div style="position:absolute;left:681.97px;top:188.07px;line-height:22.400000000000002px;font-size:14px;color:#333;font-weight:normal;white-space:nowrap;-webkit-text-stroke:0.3px #333;">任务集名称</div>
<div style="position:absolute;left:767.09px;top:180.94px;width:235.34px;height:32.73px;border:1.6px solid #d5d8dd;border-radius:5px;background:#fff"></div>
<div style="position:absolute;left:1086.99px;top:193.67px;width:3.33px;height:3.33px;background:#ff5050;border-radius:0.6px"></div>
<div style="position:absolute;left:1095.52px;top:188.07px;line-height:22.400000000000002px;font-size:14px;color:#333;font-weight:normal;white-space:nowrap;-webkit-text-stroke:0.3px #333;">频率类型</div>
<div style="position:absolute;left:1167.15px;top:180.94px;width:235.19px;height:32.73px;border:1.6px solid #d5d8dd;border-radius:5px;background:#fff"></div>
<div style="position:absolute;left:1178.26px;top:187.92px;line-height:22.400000000000002px;font-size:14px;color:#aaa;font-weight:normal;white-space:nowrap;-webkit-text-stroke:0.3px #aaa;">请选择</div>
<svg style="position:absolute;left:1381.13px;top:192.76px;width:12.12px;height:9.09px;overflow:visible;" viewBox="911.4 127.19999999999999 8.0 6.0"><path d="M911.4 128.39999999999998 H918.8 L915.1 132.2 Z" fill="#b5b5b5"/></svg>
<div style="position:absolute;left:673.29px;top:241.86px;width:3.33px;height:3.33px;background:#ff5050;border-radius:0.6px"></div>
<div style="position:absolute;left:681.97px;top:236.26px;line-height:22.400000000000002px;font-size:14px;color:#333;font-weight:normal;white-space:nowrap;-webkit-text-stroke:0.3px #333;">任务集频率</div>
<div style="position:absolute;left:767.09px;top:229.13px;width:235.34px;height:32.73px;border:1.6px solid #d5d8dd;border-radius:5px;background:#fff"></div>
<div style="position:absolute;left:778.20px;top:236.11px;line-height:22.400000000000002px;font-size:14px;color:#aaa;font-weight:normal;white-space:nowrap;-webkit-text-stroke:0.3px #aaa;">请选择</div>
<svg style="position:absolute;left:981.22px;top:240.95px;width:12.12px;height:9.09px;overflow:visible;" viewBox="647.5 159.0 8.0 6.0"><path d="M647.5 160.2 H654.9 L651.2 164.0 Z" fill="#b5b5b5"/></svg>
<div style="position:absolute;left:1086.99px;top:241.86px;width:3.33px;height:3.33px;background:#ff5050;border-radius:0.6px"></div>
<div style="position:absolute;left:1095.52px;top:236.26px;line-height:22.400000000000002px;font-size:14px;color:#333;font-weight:normal;white-space:nowrap;-webkit-text-stroke:0.3px #333;">开始时间</div>
<div style="position:absolute;left:1167.15px;top:229.13px;width:235.19px;height:32.73px;border:1.6px solid #d5d8dd;border-radius:5px;background:#fff"></div>
<div style="position:absolute;left:663.44px;top:289.89px;width:3.33px;height:3.34px;background:#ff5050;border-radius:0.6px"></div>
<div style="position:absolute;left:672.58px;top:284.30px;line-height:22.400000000000002px;font-size:14px;color:#333;font-weight:normal;white-space:nowrap;-webkit-text-stroke:0.3px #333;">循环时长(分)</div>
<div style="position:absolute;left:767.09px;top:277.16px;width:235.34px;height:32.74px;border:1.6px solid #d5d8dd;border-radius:5px;background:#fff"></div>
<div style="position:absolute;left:1100.78px;top:289.89px;width:3.33px;height:3.34px;background:#ff5050;border-radius:0.6px"></div>
<div style="position:absolute;left:1110.07px;top:284.30px;line-height:22.400000000000002px;font-size:14px;color:#333;font-weight:normal;white-space:nowrap;-webkit-text-stroke:0.3px #333;">运送员</div>
<div style="position:absolute;left:1167.15px;top:277.16px;width:235.19px;height:32.74px;border:1.6px solid #d5d8dd;border-radius:5px;background:#fff"></div>
<div style="position:absolute;left:1178.26px;top:284.15px;line-height:22.400000000000002px;font-size:14px;color:#aaa;font-weight:normal;white-space:nowrap;-webkit-text-stroke:0.3px #aaa;">请选择</div>
<svg style="position:absolute;left:1381.13px;top:288.99px;width:12.12px;height:9.09px;overflow:visible;" viewBox="911.4 190.7 8.0 6.0"><path d="M911.4 191.89999999999998 H918.8 L915.1 195.7 Z" fill="#b5b5b5"/></svg>
<div style="position:absolute;left:634.95px;top:336.11px;width:17.27px;height:1.22px;background:#ebeef5"></div>
<div style="position:absolute;left:736.18px;top:336.11px;width:779.21px;height:1.22px;background:#ebeef5"></div>
<div style="position:absolute;left:656.97px;top:326.73px;line-height:22.400000000000002px;font-size:14px;color:#222;font-weight:bold;white-space:nowrap;">循环点信息</div>
<div style="position:absolute;left:686.93px;top:381.58px;width:3.33px;height:3.33px;background:#ff5050;border-radius:0.6px"></div>
<div style="position:absolute;left:696.07px;top:375.98px;line-height:22.400000000000002px;font-size:14px;color:#333;font-weight:normal;white-space:nowrap;-webkit-text-stroke:0.3px #333;">建筑名称</div>
<div style="position:absolute;left:767.24px;top:368.85px;width:234.89px;height:32.73px;border:1.6px solid #d5d8dd;border-radius:5px;background:#fff"></div>
<div style="position:absolute;left:778.35px;top:375.83px;line-height:22.400000000000002px;font-size:14px;color:#aaa;font-weight:normal;white-space:nowrap;-webkit-text-stroke:0.3px #aaa;">请选择</div>
<svg style="position:absolute;left:980.91px;top:380.67px;width:12.13px;height:9.09px;overflow:visible;" viewBox="647.3 251.2 8.0 6.0"><path d="M647.3 252.39999999999998 H654.6999999999999 L651.0 256.2 Z" fill="#b5b5b5"/></svg>
<div style="position:absolute;left:1086.99px;top:381.58px;width:3.33px;height:3.33px;background:#ff5050;border-radius:0.6px"></div>
<div style="position:absolute;left:1095.52px;top:375.98px;line-height:22.400000000000002px;font-size:14px;color:#333;font-weight:normal;white-space:nowrap;-webkit-text-stroke:0.3px #333;">科室名称</div>
<div style="position:absolute;left:1167.15px;top:368.85px;width:235.19px;height:32.73px;border:1.6px solid #d5d8dd;border-radius:5px;background:#fff"></div>
<div style="position:absolute;left:1178.26px;top:375.83px;line-height:22.400000000000002px;font-size:14px;color:#aaa;font-weight:normal;white-space:nowrap;-webkit-text-stroke:0.3px #aaa;">请先选择建筑信息</div>
<svg style="position:absolute;left:1381.13px;top:380.67px;width:12.12px;height:9.09px;overflow:visible;" viewBox="911.4 251.2 8.0 6.0"><path d="M911.4 252.39999999999998 H918.8 L915.1 256.2 Z" fill="#b5b5b5"/></svg>
<div style="position:absolute;left:1427.35px;top:371.73px;width:58.95px;height:24.70px;background:#3370ff;border-radius:3px"></div>
<div style="position:absolute;left:956.75px;width:1000px;text-align:center;top:376.22px;line-height:19.200000000000003px;font-size:12px;color:#fff;font-weight:normal;white-space:nowrap;-webkit-text-stroke:0.5px #fff;">添加</div>
<div style="position:absolute;left:1364.91px;top:447.04px;width:60.47px;height:31.37px;border:1px solid #8fb0ff;border-radius:4px;background:#fff"></div>
<div style="position:absolute;left:895.07px;width:1000px;text-align:center;top:455.17px;line-height:19.200000000000003px;font-size:12px;color:#3370ff;font-weight:normal;white-space:nowrap;-webkit-text-stroke:0.3px #3370ff;">关闭</div>
<div style="position:absolute;left:1436.74px;top:446.74px;width:60.01px;height:31.82px;background:#3370ff;border-radius:4px"></div>
<div style="position:absolute;left:966.75px;width:1000px;text-align:center;top:455.17px;line-height:19.200000000000003px;font-size:12px;color:#fff;font-weight:normal;white-space:nowrap;-webkit-text-stroke:0.5px #fff;">保存</div>
<div style="position:absolute;left:628.89px;top:128.05px;width:886.65px;height:303.38px;border:4.39px solid #fb4848"></div>
<div style="position:absolute;left:1427.95px;top:439.16px;width:81.23px;height:51.52px;border:4.39px solid #fb4848"></div>
<div style="position:absolute;left:239.89px;top:249.58px;width:141.69px;height:52.89px;border:3.49px solid #fb4848"></div>
<svg style="position:absolute;left:386.42px;top:227.31px;width:219.74px;height:53.04px;overflow:visible;" viewBox="255 150 145 35"><path d="M260.4 179.3 L377.6 162.6 L377.2 158.1 L394.6 162.7 L378.8 171.8 L378.3 167.4 L260.9 180.3 Z" fill="#fb4848"/></svg>
<div style="position:absolute;left:1880.15px;top:767.85px;width:36.36px;height:94.26px;background:#fff;border:1px solid #b8cdfa;border-radius:14px"></div>
<svg style="position:absolute;left:1885.15px;top:771.33px;width:27.27px;height:25.77px;overflow:visible;" viewBox="1244 509 18 17"><path d="M1251.5 524 H1248.6 V520.4 L1246.1 518.9 L1248.1 516.5 Q1248 511.5 1253.7 510.5 Q1260.5 510.5 1260.3 516 Q1260.2 519 1258.6 521.2 L1257.8 524" stroke="#3370ff" stroke-width="0.95" fill="none" stroke-linejoin="round" stroke-linecap="round"/><text x="1253.4" y="519.7" font-size="7.2" font-weight="bold" fill="#3370ff" text-anchor="middle" font-family="Liberation Sans" letter-spacing="-0.3">AI</text></svg>
<div style="position:absolute;left:1398.33px;width:1000px;text-align:center;top:798.32px;line-height:22.400000000000002px;font-size:14px;color:#333;font-weight:normal;white-space:nowrap;-webkit-text-stroke:0.3px #333;-webkit-text-stroke:0">AI</div>
<div style="position:absolute;left:1398.33px;width:1000px;text-align:center;top:817.57px;line-height:22.400000000000002px;font-size:14px;color:#333;font-weight:normal;white-space:nowrap;-webkit-text-stroke:0.3px #333;">助</div>
<div style="position:absolute;left:1398.33px;width:1000px;text-align:center;top:836.66px;line-height:22.400000000000002px;font-size:14px;color:#333;font-weight:normal;white-space:nowrap;-webkit-text-stroke:0.3px #333;">手</div>
<div style="position:absolute;left:230.34px;top:56.07px;width:1689.66px;height:41.67px;background:#fff"></div>
<div style="position:absolute;left:0.0px;top:56.07px;width:1920.00px;height:1.82px;background:linear-gradient(rgba(0,0,0,.06),rgba(0,0,0,0))"></div>
<div style="position:absolute;left:254.89px;top:56.07px;width:1610.10px;height:41.67px;background:#fafafa"></div>
<div style="position:absolute;left:402.94px;top:56.07px;width:113.05px;height:41.67px;background:#f4f4f4"></div>
<svg style="position:absolute;left:236.4px;top:71.22px;width:13.64px;height:13.64px;overflow:visible;" viewBox="156 47 9 9"><path d="M157.8 48 V55 M163.3 48 L159.6 51.4 L163.3 54.8" stroke="#c4c4c4" stroke-width="1.1" fill="none"/></svg>
<div style="position:absolute;left:254.59px;top:56.07px;width:0.75px;height:41.67px;background:#f0f0f0"></div>
<div style="position:absolute;left:270.69px;top:67.30px;line-height:22.400000000000002px;font-size:14px;color:#666;font-weight:normal;white-space:nowrap;-webkit-text-stroke:0.3px #666;">智慧后勤-中央运送</div>
<div style="position:absolute;left:418.75px;top:67.30px;line-height:22.400000000000002px;font-size:14px;color:#3370ff;font-weight:normal;white-space:nowrap;-webkit-text-stroke:0.3px #3370ff;">循环配置</div>
<svg style="position:absolute;left:494.02px;top:72.74px;width:10.61px;height:10.61px;overflow:visible;" viewBox="326 48 7 7"><path d="M326.7 48.7 L332 54 M332 48.7 L326.7 54" stroke="#3370ff" stroke-width="0.9" opacity=".7"/></svg>
<div style="position:absolute;left:1894.39px;top:56.07px;width:0.76px;height:41.67px;background:#eee"></div>
<svg style="position:absolute;left:1871.51px;top:71.22px;width:15.15px;height:13.64px;overflow:visible;" viewBox="1235 47 10 9"><path d="M1236.4 48.6 L1239.6 51.5 L1236.4 54.4 M1242.5 48.4 V54.6" stroke="#c8c8c8" stroke-width="1.3" fill="none"/></svg>
<svg style="position:absolute;left:1898.78px;top:71.22px;width:18.19px;height:13.64px;overflow:visible;" viewBox="1253 47 12 9"><path d="M1254 49 L1258.6 53.8 L1263.2 49" stroke="#555" stroke-width="1.1" fill="none"/></svg>
</div></body></html>
